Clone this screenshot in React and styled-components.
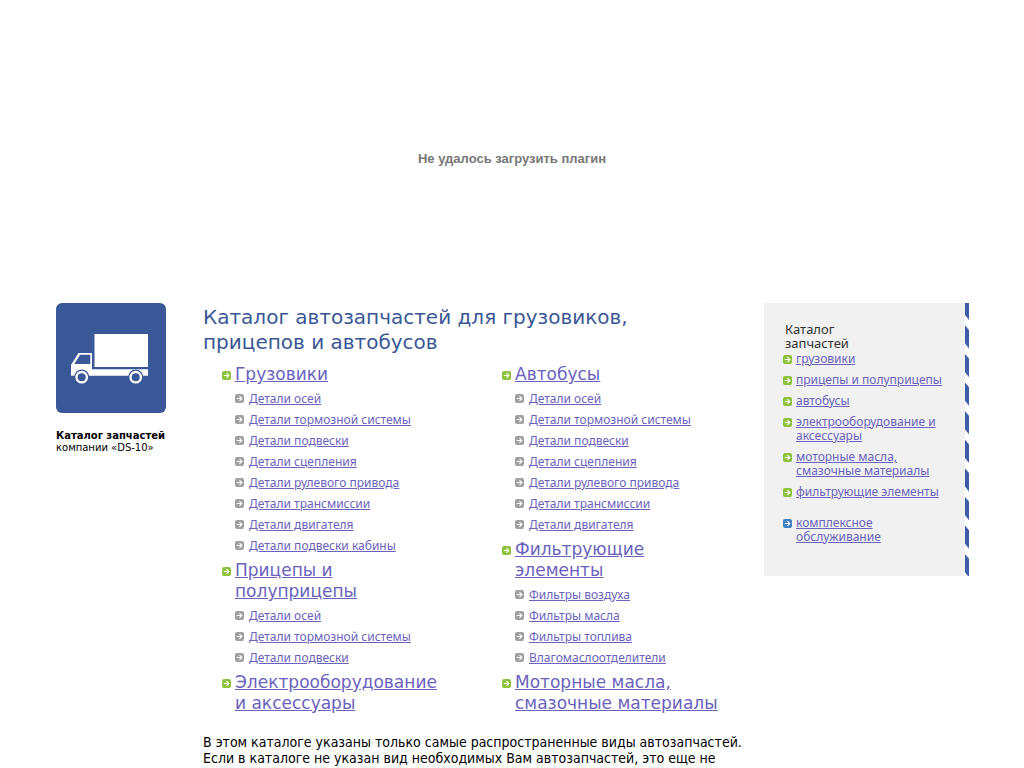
import React from 'react';
import styled, { createGlobalStyle } from 'styled-components';

const GlobalStyle = createGlobalStyle`
  body {
    margin: 0;
    background: #fff;
    color: #000;
    font-family: Verdana, 'DejaVu Sans', sans-serif;
  }
`;

const narrowFont = `Tahoma, 'Noto Sans', 'DejaVu Sans', sans-serif`;

const colors = {
  green: '#8fc13e',
  gray: '#a0a0a0',
  blue: '#3f7fc4',
};

const PluginArea = styled.header`
  display: flex;
  align-items: center;
  justify-content: center;
  box-sizing: border-box;
  height: 303px;
  padding-top: 14px;
`;

const PluginMessage = styled.p`
  margin: 0;
  color: #777;
  font: bold 13px/16px 'Liberation Sans', Arial, sans-serif;
`;

const Page = styled.div`
  display: grid;
  grid-template-columns: 147px minmax(0, 1fr) 205px;
  align-items: start;
  padding: 0 55px 0 56px;
`;

const Caption = styled.p`
  margin: 17px 0 0;
  font-size: 10px;
  line-height: 12px;
`;

const Title = styled.h1`
  margin: 2px 0 5px;
  color: #3a5795;
  font-size: 20px;
  font-weight: normal;
  line-height: 25px;
`;

const Columns = styled.div`
  display: grid;
  grid-template-columns: 1fr 1fr;
  padding: 0 1px 17px 0;
`;

const Column = styled.div`
  padding-left: 19px;
`;

const GroupTitle = styled.h2`
  display: flex;
  gap: 4px;
  margin: 4px 0 3px;
  font-size: 17px;
  font-weight: normal;
  line-height: 21px;

  svg {
    margin-top: 7px;
  }
`;

const PartList = styled.ul`
  margin: 0;
  padding: 0 0 0 13px;
  list-style: none;
  font-family: ${narrowFont};
  font-size: 12px;
  line-height: 21px;
`;

const PartItem = styled.li`
  display: flex;
  gap: 5px;

  svg {
    margin-top: 6px;
  }
`;

const Anchor = styled.a`
  color: #6a62bd;
  white-space: pre-line;
`;

const Note = styled.p`
  margin: 0;
  font-family: 'DejaVu Sans Condensed', 'DejaVu Sans', sans-serif;
  font-size: 14px;
  line-height: 16px;
`;

const Sidebar = styled.aside`
  display: flex;
  background: #f1f1f1;
`;

const SideContent = styled.nav`
  flex: 1;
  padding: 19px 0 25px 19px;
  font-family: ${narrowFont};
  font-size: 12px;
  line-height: 14px;
`;

const SideTitle = styled.h3`
  margin: 0 0 2px 2px;
  color: #333;
  font-size: 13px;
  font-weight: normal;
  line-height: 14px;
`;

const SideList = styled.ul`
  margin: 0;
  padding: 0;
  list-style: none;
`;

const SideItem = styled.li`
  display: flex;
  gap: 4px;
  margin-bottom: 7px;
  padding-top: ${(props) => (props.$separate ? '10px' : '0')};

  svg {
    margin-top: 3px;
  }
`;

const StripeBox = styled.div`
  position: relative;
  width: 4px;

  svg {
    position: absolute;
    inset: 0;
  }
`;

const BulletSvg = styled.svg`
  flex: none;
  display: block;
`;

const Bullet = ({ color }) => (
  <BulletSvg width="9" height="9" viewBox="0 0 9 9" aria-hidden="true">
    <rect width="9" height="9" rx="2" fill={color} />
    <path d="M1.8 4.5H6.8M4.5 2.2L6.8 4.5L4.5 6.8" fill="none" stroke="#fff" strokeWidth="1.1" />
  </BulletSvg>
);

const TruckLogo = () => (
  <svg width="110" height="110" viewBox="0 0 110 110" display="block" aria-hidden="true">
    <rect width="110" height="110" rx="6" fill="#3a5897" />
    <rect x="38.5" y="31" width="53.5" height="33" fill="#fff" />
    <path d="M22.5 50H36V66.2H92V72.8H15V62Z" fill="#fff" />
    <path d="M24 51.7H34.3V61H18.3Z" fill="#3a5897" />
    {[25.7, 79.7].map((x) => (
      <g key={x}>
        <circle cx={x} cy="74.2" r="7.6" fill="#3a5897" />
        <circle cx={x} cy="74.2" r="5.2" fill="#3a5897" stroke="#fff" strokeWidth="2.3" />
      </g>
    ))}
  </svg>
);

const Stripes = () => (
  <StripeBox>
    <svg width="100%" height="100%" aria-hidden="true">
      <defs>
        <pattern id="stripes" y="12" width="4" height="28.6" patternUnits="userSpaceOnUse">
          <rect width="4" height="29" fill="#3e5da8" />
          <path d="M0 0L4 5V15L0 10Z" fill="#fff" />
        </pattern>
      </defs>
      <rect width="100%" height="100%" fill="url(#stripes)" />
    </svg>
  </StripeBox>
);

const truckParts = [
  'Детали осей',
  'Детали тормозной системы',
  'Детали подвески',
  'Детали сцепления',
  'Детали рулевого привода',
  'Детали трансмиссии',
  'Детали двигателя',
];

const columns = [
  [
    { title: 'Грузовики', parts: [...truckParts, 'Детали подвески кабины'] },
    { title: 'Прицепы и\nполуприцепы', parts: truckParts.slice(0, 3) },
    { title: 'Электрооборудование\nи аксессуары', parts: [] },
  ],
  [
    { title: 'Автобусы', parts: truckParts },
    {
      title: 'Фильтрующие\nэлементы',
      parts: ['Фильтры воздуха', 'Фильтры масла', 'Фильтры топлива', 'Влагомаслоотделители'],
    },
    { title: 'Моторные масла,\nсмазочные материалы', parts: [] },
  ],
];

const sideLinks = [
  { text: 'грузовики' },
  { text: 'прицепы и полуприцепы' },
  { text: 'автобусы' },
  { text: 'электрооборудование и\nаксессуары' },
  { text: 'моторные масла,\nсмазочные материалы' },
  { text: 'фильтрующие элементы' },
  { text: 'комплексное\nобслуживание', separate: true },
];

const Group = ({ title, parts }) => (
  <section>
    <GroupTitle>
      <Bullet color={colors.green} />
      <Anchor href="#">{title}</Anchor>
    </GroupTitle>
    {parts.length > 0 && (
      <PartList>
        {parts.map((part) => (
          <PartItem key={part}>
            <Bullet color={colors.gray} />
            <Anchor href="#">{part}</Anchor>
          </PartItem>
        ))}
      </PartList>
    )}
  </section>
);

const App = () => {
  return (
    <>
      <GlobalStyle />
      <PluginArea>
        <PluginMessage>Не удалось загрузить плагин</PluginMessage>
      </PluginArea>
      <Page>
        <div>
          <TruckLogo />
          <Caption>
            <b>Каталог запчастей</b>
            <br />
            компании «DS-10»
          </Caption>
        </div>
        <main>
          <Title>
            Каталог автозапчастей для грузовиков,
            <br />
            прицепов и автобусов
          </Title>
          <Columns>
            {columns.map((groups, index) => (
              <Column key={index}>
                {groups.map((group) => (
                  <Group key={group.title} {...group} />
                ))}
              </Column>
            ))}
          </Columns>
          <Note>
            В этом каталоге указаны только самые распространенные виды автозапчастей.
            <br />
            Если в каталоге не указан вид необходимых Вам автозапчастей, это еще не
          </Note>
        </main>
        <Sidebar>
          <SideContent>
            <SideTitle>
              Каталог
              <br />
              запчастей
            </SideTitle>
            <SideList>
              {sideLinks.map(({ text, separate }) => (
                <SideItem key={text} $separate={separate}>
                  <Bullet color={separate ? colors.blue : colors.green} />
                  <Anchor href="#">{text}</Anchor>
                </SideItem>
              ))}
            </SideList>
          </SideContent>
          <Stripes />
        </Sidebar>
      </Page>
    </>
  );
};

export default App;
